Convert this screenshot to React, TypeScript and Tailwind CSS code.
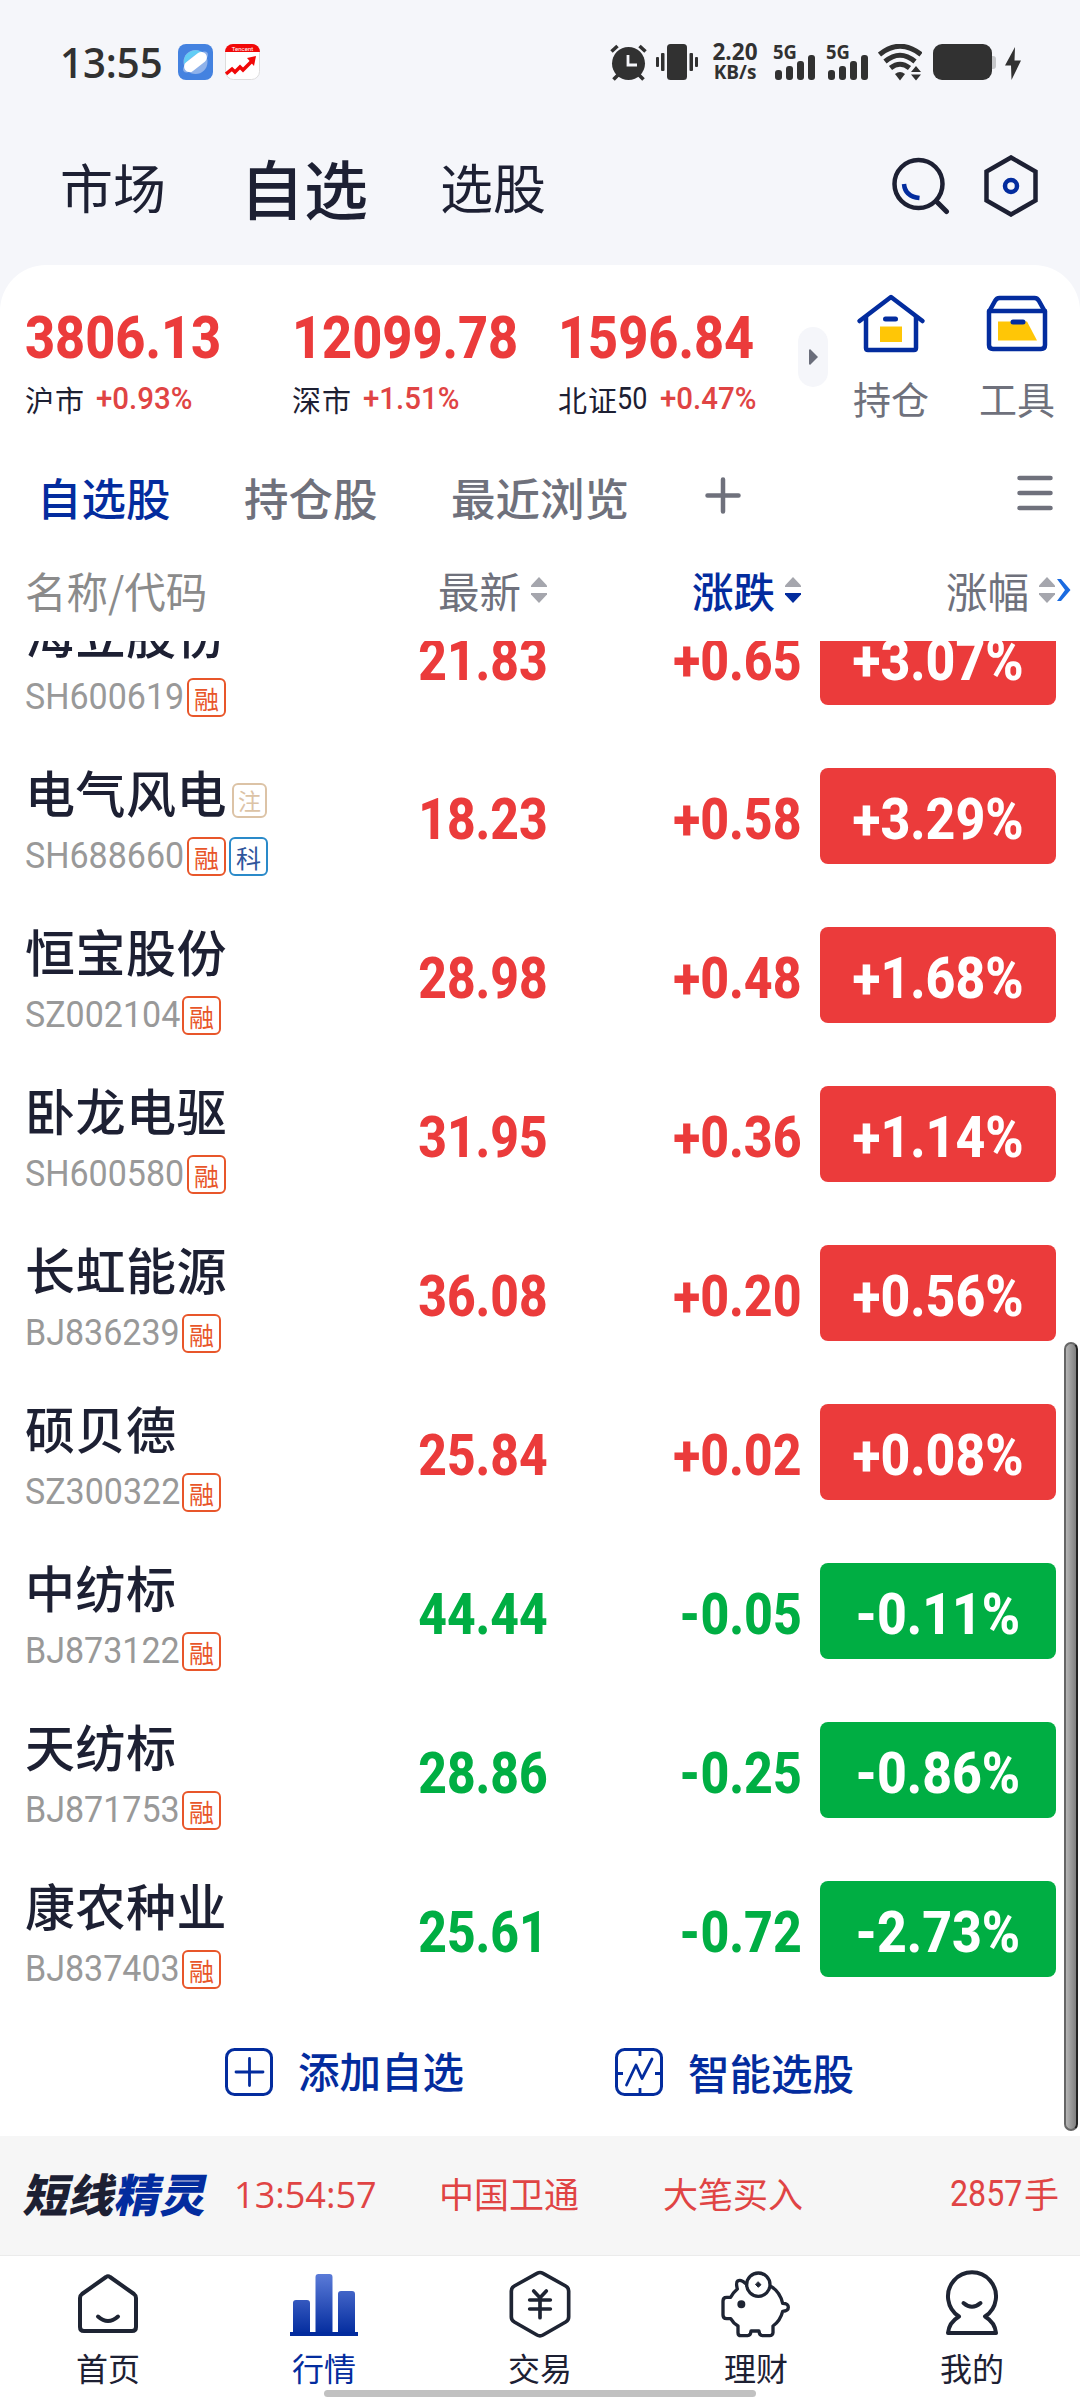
import { ReactNode } from "react";
import clsx from "clsx";

type Badge = "rong" | "ke";

type Stock = {
    name: string;
    code: string;
    price: string;
    change: string;
    percent: string;
    badges: Badge[];
    note?: boolean;
};

const indexes = [
    { value: "3806.13", label: "沪市", percent: "+0.93%", box: "w-[267px]", labelBox: "w-[71px]" },
    { value: "12099.78", label: "深市", percent: "+1.51%", box: "w-[266px]", labelBox: "w-[71px]" },
    { value: "1596.84", label: "北证", suffix: "50", percent: "+0.47%", box: "w-[240px]", labelBox: "w-[59px]" },
];

const stocks: Stock[] = [
    { name: "海立股份", code: "SH600619", price: "21.83", change: "+0.65", percent: "+3.07%", badges: ["rong"] },
    { name: "电气风电", code: "SH688660", price: "18.23", change: "+0.58", percent: "+3.29%", badges: ["rong", "ke"], note: true },
    { name: "恒宝股份", code: "SZ002104", price: "28.98", change: "+0.48", percent: "+1.68%", badges: ["rong"] },
    { name: "卧龙电驱", code: "SH600580", price: "31.95", change: "+0.36", percent: "+1.14%", badges: ["rong"] },
    { name: "长虹能源", code: "BJ836239", price: "36.08", change: "+0.20", percent: "+0.56%", badges: ["rong"] },
    { name: "硕贝德", code: "SZ300322", price: "25.84", change: "+0.02", percent: "+0.08%", badges: ["rong"] },
    { name: "中纺标", code: "BJ873122", price: "44.44", change: "-0.05", percent: "-0.11%", badges: ["rong"] },
    { name: "天纺标", code: "BJ871753", price: "28.86", change: "-0.25", percent: "-0.86%", badges: ["rong"] },
    { name: "康农种业", code: "BJ837403", price: "25.61", change: "-0.72", percent: "-2.73%", badges: ["rong"] },
];

// narrow figures, squeezed from Roboto
const Num = ({ children, className }: { children: ReactNode; className?: string }) => (
    <span className={clsx("inline-block whitespace-nowrap font-['Roboto',sans-serif]", className)}>{children}</span>
);

const Signal = () => (
    <div className="w-[42px] h-[36px] relative">
        <span className="absolute left-0 -top-[2px] text-[20px] leading-[20px] font-bold font-['Noto_Sans',sans-serif] origin-left scale-x-[0.92]">5G</span>
        <svg className="absolute left-0 top-0" width="42" height="36" fill="currentColor">
            <rect x="2" y="26" width="7" height="10" rx="3" />
            <rect x="13" y="22" width="7" height="14" rx="3" />
            <rect x="24" y="17" width="7" height="19" rx="3" />
            <rect x="35" y="11" width="7" height="25" rx="3" />
        </svg>
    </div>
);

const StatusBar = () => (
    <div className="h-[124px] flex items-center pl-[60px] text-[#313131]">
        <span className="w-[118px] text-[42px] leading-[42px] font-semibold font-['Open_Sans',sans-serif]">
            <span className="inline-block origin-left scale-x-[0.955]">13:55</span>
        </span>
        <svg className="shrink-0" width="35" height="36" viewBox="0 0 35 36">
            <rect width="35" height="36" rx="8" fill="#4482e0" />
            <circle cx="17.5" cy="18" r="12" fill="#8fb2ea" />
            <path d="M6 20a12 12 0 0 1 18-12z" fill="#62cdf5" />
            <ellipse cx="17.5" cy="18" rx="15" ry="6" transform="rotate(-38 17.5 18)" fill="#8fb2ea" />
            <rect x="4.500" y="12.500" width="26" height="11" rx="5.500" transform="rotate(-38 17.5 18)" fill="#fff" />
        </svg>
        <svg className="shrink-0 ml-[12px]" width="35" height="36" viewBox="0 0 35 36">
            <rect x="0.500" y="0.500" width="34" height="35" rx="8" fill="#fff" stroke="#ddd" />
            <path d="M0 8a8 8 0 0 1 8-8h19a8 8 0 0 1 8 8z" fill="#f10808" />
            <text x="17.500" y="6.500" fontSize="6" textAnchor="middle" fill="#fff" fontFamily="Roboto, sans-serif">Tencent</text>
            <path d="M1 30l6-5 3 3 5-5 3 3 9-9" fill="none" stroke="#f10808" strokeWidth="3.500" />
            <path d="M31 12l-2 10-7-8z" fill="#f10808" />
        </svg>

        <svg className="shrink-0 ml-[350px]" width="37" height="37" viewBox="0 0 37 37">
            <circle cx="18.500" cy="19.500" r="16.500" fill="currentColor" />
            <path d="M18 11v10h9" fill="none" stroke="#f5f6fa" strokeWidth="2.800" />
            <path d="M1.500 7.500l6-5.500M35.500 7.500l-6-5.500M8 31l-4.500 4.500M29 31l4.500 4.500" stroke="currentColor" strokeWidth="3.600" />
        </svg>
        <svg className="shrink-0 ml-[9px]" width="42" height="36" viewBox="0 0 42 36" fill="currentColor">
            <rect x="11" width="20" height="36" rx="3.500" />
            <rect x="5" y="9" width="3.500" height="18" rx="1" />
            <rect x="33.500" y="9" width="3.500" height="18" rx="1" />
            <rect x="0" y="13" width="3" height="10" rx="1" />
            <rect x="39" y="13" width="3" height="10" rx="1" />
        </svg>
        <div className="w-[46px] ml-[14px] flex flex-col items-center font-['Open_Sans',sans-serif] font-bold">
            <span className="text-[22.500px] leading-[20px]">2.20</span>
            <span className="text-[19px] leading-[20px]">KB/s</span>
        </div>
        <div className="flex gap-[11px] ml-[15px]">
            <Signal />
            <Signal />
        </div>
        <svg className="shrink-0 ml-[10px]" width="44" height="37" viewBox="0 0 44 37">
            <path d="M1.500 10.500Q22-6 43 10.500" fill="none" stroke="currentColor" strokeWidth="5" />
            <path d="M7 17.500Q22 5 37 17.500" fill="none" stroke="currentColor" strokeWidth="5" />
            <path d="M12.500 24Q22 16.500 31.500 24" fill="none" stroke="currentColor" strokeWidth="5" />
            <path d="M17 30q5-4 10 0l-5 6.500z" fill="currentColor" />
            <path d="M38 22l5 6H33zM38 36.500l5-6H33z" fill="currentColor" />
        </svg>
        <div className="w-[59px] h-[36px] ml-[11px] rounded-[9px] bg-[#313131]" />
        <div className="w-[4px] h-[13px] rounded-r-[3px] bg-[#c6c7ca]" />
        <svg className="shrink-0 ml-[9px] mt-[3px]" width="16" height="33" viewBox="0 0 16 33" fill="currentColor">
            <path d="M10 0L0 18.500h6L6.500 33 16 13.500H9.500z" />
        </svg>
    </div>
);

const Header = () => (
    <div className="h-[141px] pb-[17px] flex items-center text-[#1d2033]">
        <span className="w-[180px] ml-[60px] text-[53px] leading-[60px]">市场</span>
        <span className="w-[200px] text-[64px] leading-[70px] font-medium">自选</span>
        <span className="w-[451px] text-[53px] leading-[60px]">选股</span>
        <svg className="shrink-0 -mt-1" width="60" height="62" viewBox="0 0 60 62" fill="none">
            <circle cx="27.500" cy="31" r="24" stroke="#1d2033" strokeWidth="4.500" />
            <path d="M45.500 48.500l10 10" stroke="#1d2033" strokeWidth="5" strokeLinecap="round" />
            <path d="M13 31q1 12.500 15.500 14" stroke="#032c9e" strokeWidth="4.500" />
        </svg>
        <svg className="shrink-0 ml-[33px]" width="54" height="62" viewBox="0 0 54 62" fill="none">
            <path d="M27 2.500L51.500 16.500v29L27 59.500 2.500 45.500v-29z" stroke="#1d2033" strokeWidth="4.500" />
            <circle cx="27" cy="31" r="6" stroke="#032c9e" strokeWidth="4.500" />
        </svg>
    </div>
);

const Indexes = () => (
    <div className="h-[189px] flex">
        <div className="flex pl-[25px] pt-[43px]">
            {indexes.map((item) => (
                <div key={item.label} className={item.box}>
                    <Num className="block text-[60px] leading-[60px] font-extrabold text-[#eb3b3b] origin-left scale-x-[0.87]">{item.value}</Num>
                    <div className="h-[40px] mt-[11px] flex items-center text-[29px] leading-[40px] tracking-[1px]">
                        <span className={clsx("shrink-0 whitespace-nowrap text-[#1d2033]", item.labelBox)}>{item.label}</span>
                        {item.suffix && <Num className="w-[43px] text-[31px] text-[#1d2033] tracking-normal origin-left scale-x-[0.87]">{item.suffix}</Num>}
                        <Num className="text-[31px] tracking-normal font-medium text-[#e04444] origin-left scale-x-[0.95]">{item.percent}</Num>
                    </div>
                </div>
            ))}
        </div>
        <div className="w-[30px] h-[60px] mt-[62px] rounded-full bg-[#f5f6fa] flex items-center justify-center">
            <svg width="9" height="16" viewBox="0 0 9 16"><path d="M0 1l1-1 8 8-8 8-1-1z" fill="#6b6e7b" /></svg>
        </div>
        <div className="w-[126px] pt-[28px] flex flex-col items-center text-[#6f717c]">
            <svg width="70" height="62" viewBox="0 0 70 62" fill="none" strokeLinecap="round" strokeLinejoin="round">
                <path d="M3.500 28L35 4l31.500 24" stroke="#032c9e" strokeWidth="4.500" />
                <path d="M10 24v31q0 2 2 2h46q2 0 2-2V24" stroke="#032c9e" strokeWidth="4.500" />
                <path d="M29.500 26h10" stroke="#032c9e" strokeWidth="5" />
                <path d="M24 33.500h22V49H24z" fill="#ffc606" />
            </svg>
            <span className="mt-[23px] text-[38px] leading-[40px]">持仓</span>
        </div>
        <div className="w-[126px] pt-[28px] flex flex-col items-center text-[#6f717c]">
            <svg width="64" height="62" viewBox="0 0 64 62" fill="none" strokeLinecap="round" strokeLinejoin="round">
                <path d="M4 18v34q0 4 4 4h48q4 0 4-4V18z" stroke="#032c9e" strokeWidth="4.500" />
                <path d="M5 17l5-9q1.500-3 4.500-3h35q3 0 4.500 3l5 9" stroke="#032c9e" strokeWidth="4.500" />
                <path d="M13 28.500h29l10 19H13z" fill="#ffc606" />
                <path d="M28 29h10" stroke="#032c9e" strokeWidth="5" />
            </svg>
            <span className="mt-[23px] text-[38px] leading-[40px]">工具</span>
        </div>
    </div>
);

const Tabs = () => (
    <div className="h-[88px] pb-[3px] flex items-center text-[44.500px] leading-[60px] text-[#6f717c] font-medium">
        <span className="w-[207px] ml-[37px] text-[#032c9e]">自选股</span>
        <span className="w-[207px]">持仓股</span>
        <span className="w-[254px]">最近浏览</span>
        <svg className="-mt-[3px]" width="36" height="37" viewBox="0 0 36 37" stroke="#6f717c" strokeWidth="4.500" strokeLinecap="round">
            <path d="M2.500 18.500h31M18 2.500v32" />
        </svg>
        <svg className="ml-[276px] -mt-[7px]" width="36" height="36" viewBox="0 0 36 36" stroke="#6f717c" strokeWidth="4.500" strokeLinecap="round">
            <path d="M2.500 3h31M2.500 18h31M2.500 33h31" />
        </svg>
    </div>
);

const Sort = ({ down }: { down?: boolean }) => (
    <svg className="shrink-0" width="16" height="26" viewBox="0 0 16 26">
        <path d="M8 0l8 8.500V10H0V8.500z" fill="#a5a6ad" />
        <path d="M8 26l8-8.500V16H0v1.500z" fill={down ? "#032c9e" : "#a5a6ad"} />
    </svg>
);

const TableHead = () => (
    <div className="h-[99px] pb-[3px] flex items-center text-[41.500px] leading-[60px] text-[#6f717c]">
        <span className="w-[413px] ml-[25px] text-[#8b8b8b] whitespace-nowrap">名称/代码</span>
        <span className="w-[93px]">最新</span>
        <Sort />
        <span className="w-[93px] ml-[145px] text-[#032c9e] font-medium">涨跌</span>
        <Sort down />
        <span className="w-[93px] ml-[145px]">涨幅</span>
        <Sort />
        <svg className="shrink-0 ml-[1px]" width="16" height="24" viewBox="0 0 16 24" fill="none">
            <path d="M1 1h4l9.500 11L5 23H1l8-11z" fill="#1b6be0" />
        </svg>
    </div>
);

const badgeStyle: Record<Badge, { text: string; style: string }> = {
    rong: { text: "融", style: "border-[#e8562a] text-[#e8562a]" },
    ke: { text: "科", style: "border-[#2a8ac9] text-[#2f559c]" },
};

const StockRow = ({ stock }: { stock: Stock }) => {
    const falling = stock.change.startsWith("-");

    return (
        <div className="h-[159px] flex items-center pl-[25px]">
            <div className="w-[300px] pt-[9px] shrink-0">
                <div className="h-[56px] -mt-[1px] flex items-center">
                    <span className="text-[50px] leading-[56px] tracking-[0.500px] font-medium text-[#1d2033]">{stock.name}</span>
                    {stock.note && (
                        <span className="w-[35px] h-[35px] ml-[5px] mt-[20px] rounded-[6px] border-2 border-[#dcc3a6] text-[#dcc3a6] text-[23px] leading-[30px] text-center">注</span>
                    )}
                </div>
                <div className="h-[42px] mt-[16px] flex items-center">
                    <Num className={clsx("text-[36px] leading-[42px] text-[#999] origin-left scale-x-[0.945]", stock.code.startsWith("SH") ? "w-[162px]" : "w-[157px]")}>{stock.code}</Num>
                    {stock.badges.map((badge) => (
                        <span key={badge} className={clsx("w-[39px] h-[39px] mt-[2px] mr-[3px] rounded-[6px] border-2 text-[25px] leading-[36px] text-center", badgeStyle[badge].style)}>
                            {badgeStyle[badge].text}
                        </span>
                    ))}
                </div>
            </div>
            <div className={clsx("w-[223px] pt-[3px] text-right text-[57.500px] leading-[60px] font-extrabold", falling ? "text-[#00ae43]" : "text-[#eb3b3b]")}>
                <Num className="origin-right scale-x-[0.865]">{stock.price}</Num>
            </div>
            <div className={clsx("w-[254px] pt-[3px] text-right text-[57.500px] leading-[60px] font-extrabold", falling ? "text-[#00ae43]" : "text-[#eb3b3b]")}>
                <Num className="origin-right scale-x-[0.87]">{stock.change}</Num>
            </div>
            <div className={clsx("w-[236px] h-[96px] pt-[9px] ml-[18px] rounded-[8px] flex items-center justify-center text-[57.500px] leading-[60px] font-extrabold text-white", falling ? "bg-[#00ae43]" : "bg-[#eb3b3b]")}>
                <Num className="scale-x-[0.9]">{stock.percent}</Num>
            </div>
        </div>
    );
};

const StockList = () => (
    <div className="relative h-[1495px] overflow-hidden">
        <div className="-mt-[64px]">
            {stocks.map((stock) => (
                <StockRow key={stock.code} stock={stock} />
            ))}
        </div>
        <div className="h-[128px] flex items-center text-[41.500px] leading-[50px] text-[#032c9e]">
            <svg className="ml-[225px] shrink-0" width="48" height="48" viewBox="0 0 48 48" fill="none" stroke="#032c9e">
                <rect x="1.500" y="1.500" width="45" height="45" rx="8" strokeWidth="3" />
                <path d="M11 24h27M24.500 10.500v27" strokeWidth="2.800" strokeLinecap="round" />
            </svg>
            <span className="w-[317px] ml-[25px] -mt-[5px] font-medium">添加自选</span>
            <svg className="shrink-0" width="48" height="48" viewBox="0 0 48 48" fill="none" stroke="#032c9e">
                <rect x="1.500" y="1.500" width="45" height="45" rx="8" strokeWidth="3" />
                <path d="M25 1v7M25 47v-7M1 25.500h7M47 25.500h-7" strokeWidth="2.800" />
                <path d="M11.500 37l9.500-20 6 13.500L37 11" strokeWidth="2.800" strokeLinecap="round" strokeLinejoin="round" />
            </svg>
            <span className="ml-[25px] -mt-[1px] font-medium">智能选股</span>
        </div>
        <div className="absolute left-[1064px] top-[701px] w-[14px] h-[789px] rounded-full border-2 border-[#666] border-r-[#222] bg-gradient-to-r from-[#b5b5b5] to-[#808080]" />
    </div>
);

const Ticker = () => (
    <div className="h-[120px] bg-[#f6f6f6] border-b border-[#ebebeb] flex items-center text-[35px] leading-[50px] text-[#e04444]">
        <span className="w-[208px] ml-[26px] -mt-[5px] text-[45px] font-black text-[#1d2033] whitespace-nowrap">
            <span className="inline-block origin-left scale-x-[1.015] -skew-x-12">
                短线<span className="text-[#032c9e]">精灵</span>
            </span>
        </span>
        <Num className="w-[205px] -mt-[4px] text-[37px] origin-left scale-x-[0.975] !font-['Open_Sans']">13:54:57</Num>
        <span className="w-[224px] -mt-[6px]">中国卫通</span>
        <span className="w-[287px] -mt-[6px]">大笔买入</span>
        <Num className="w-[74px] -mt-[4px] text-[37px] origin-left scale-x-[0.87]">2857</Num>
        <span className="-mt-[6px]">手</span>
    </div>
);

const HomeIcon = () => (
    <svg width="60" height="68" viewBox="0 0 60 68" fill="none" stroke="#1e2433" strokeWidth="4" strokeLinecap="round">
        <path d="M28 7q2-1.500 4 0l24 17q2 1.500 2 4v29q0 4-4 4H6q-4 0-4-4V28q0-2.500 2-4z" strokeLinejoin="round" />
        <path d="M20 46.500q10 9 20 0" />
    </svg>
);

const ChartIcon = () => (
    <svg width="68" height="68" viewBox="0 0 68 68">
        <defs>
            <linearGradient id="bars" x1="0" y1="4" x2="0" y2="64" gradientUnits="userSpaceOnUse">
                <stop stopColor="#5b7bd8" />
                <stop offset="1" stopColor="#032c9e" />
            </linearGradient>
        </defs>
        <path d="M3 62V33q0-3 3-3h11q3 0 3 3v29zM25.500 62V7q0-3 3-3h11q3 0 3 3v55zM48 62V24q0-3 3-3h11q3 0 3 3v38z" fill="url(#bars)" />
        <path d="M0 62h68v4H0z" fill="#032c9e" />
    </svg>
);

const TradeIcon = () => (
    <svg width="62" height="68" viewBox="57 59 186 204" fill="none" stroke="#1e2433" strokeWidth="11" strokeLinecap="round" strokeLinejoin="round">
        <path d="M141 69q9-5 18 0l68 38q9 5 9 15v78q0 10-9 15l-68 39q-9 5-18 0l-68-39q-9-5-9-15v-78q0-10 9-15z" />
        <path d="M131 122l19 20 19-20M119 149h62M119 176h62M150 142v60" />
    </svg>
);

const PigIcon = () => (
    <svg width="72" height="68" viewBox="691 59 216 204" fill="none" stroke="#1e2433" strokeWidth="10" strokeLinecap="round" strokeLinejoin="round">
        <circle cx="806" cy="103" r="35" />
        <path d="M768 100q-14-14-24-8-6 4-1 24-12 10-20 25h-12q-11 0-11 11v42q0 11 11 11h12q8 14 22 22v20q0 9 9 9h20q9 0 10-14h24q1 14 10 14h22q9 0 10-9v-20q22-16 29-44 17-1 17-12 0-12-17-12-8-34-34-50" />
        <circle cx="755" cy="162" r="7" fill="#1e2433" />
        <path d="M806 95l8 8-8 8-8-8z" fill="#1e2433" strokeWidth="3" />
    </svg>
);

const MeIcon = () => (
    <svg width="54" height="68" viewBox="0 0 54 68" fill="none" stroke="#1e2433" strokeWidth="4" strokeLinecap="round" strokeLinejoin="round">
        <path d="M14 46.500a24 24 0 1 1 26 0q10 6 11 16.500H3q1-10.500 11-16.500z" />
        <path d="M18.500 33q8.500 7.500 17 0" />
    </svg>
);

const navItems = [
    { label: "首页", icon: <HomeIcon /> },
    { label: "行情", icon: <ChartIcon />, active: true },
    { label: "交易", icon: <TradeIcon /> },
    { label: "理财", icon: <PigIcon /> },
    { label: "我的", icon: <MeIcon /> },
];

const BottomNav = () => (
    <div className="relative h-[144px] bg-white grid grid-cols-5 pt-[14px]">
        {navItems.map((item) => (
            <div key={item.label} className={clsx("flex flex-col items-center", item.active ? "text-[#032c9e]" : "text-[#1d2033]")}>
                {item.icon}
                <span className="mt-[9px] text-[32px] leading-[40px]">{item.label}</span>
            </div>
        ))}
        <div className="absolute left-[324px] top-[134px] w-[432px] h-[7px] rounded-full bg-[#c1c1c1]" />
    </div>
);

const App = () => {
    return (
        <div className="w-[1080px] h-[2400px] overflow-hidden bg-[#f5f6fa] font-['Noto_Sans_CJK_SC',sans-serif]">
            <StatusBar />
            <Header />
            <div className="bg-white rounded-t-[46px]">
                <Indexes />
                <Tabs />
                <TableHead />
                <StockList />
            </div>
            <Ticker />
            <BottomNav />
        </div>
    );
};

export default App;
